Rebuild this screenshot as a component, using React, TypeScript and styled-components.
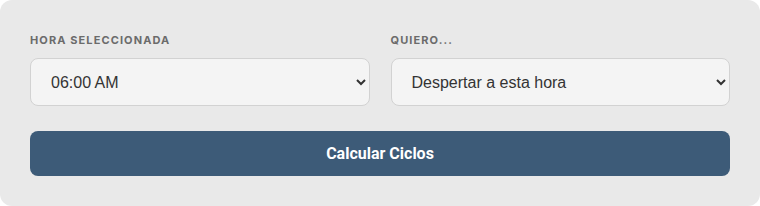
import React, { useState } from 'react';
import styled, { createGlobalStyle } from 'styled-components';

//全体のスタイル
const GlobalStyle = createGlobalStyle`
  html, body {
    margin: 0;
    padding: 0;
    background: #ffffff;
  }
`;

//カード
const Card = styled.div`
  box-sizing: border-box;
  width: 760px;
  height: 206px;
  background: #e9e9e9;
  border-radius: 12px;
  padding: 32px 30px 30px;
  font-family: "Liberation Sans", Arial, sans-serif;
`;

const Row = styled.div`
  display: grid;
  grid-template-columns: 1fr 1fr;
  column-gap: 21px;
`;

const Field = styled.div`
  display: flex;
  flex-direction: column;
`;

const Label = styled.label`
  font-family: Inter, "Liberation Sans", sans-serif;
  font-size: 11px;
  font-weight: 700;
  letter-spacing: 1.1px;
  text-transform: uppercase;
  color: #6b6b6b;
  line-height: 16px;
  margin-bottom: 10px;
`;

const Select = styled.select`
  box-sizing: border-box;
  height: 48px;
  width: 100%;
  padding: 0 14px 0 16px;
  border: 1px solid #d2d2d2;
  border-radius: 8px;
  background: #f4f4f4;
  color: #333333;
  font-family: "Liberation Sans", Arial, sans-serif;
  font-size: 16px;
`;

const Button = styled.button`
  box-sizing: border-box;
  display: block;
  width: 100%;
  height: 45px;
  margin-top: 25px;
  border: none;
  border-radius: 8px;
  background: #3d5b78;
  color: #ffffff;
  font-family: Roboto, "Liberation Sans", sans-serif;
  font-size: 16px;
  font-weight: 700;
  cursor: pointer;
`;

function App() {
  const [hora, setHora] = useState('06:00');
  const [modo, setModo] = useState('despertar');

  return (
    <>
      <GlobalStyle />
      <Card>
        <Row>
          <Field>
            <Label>Hora seleccionada</Label>
            <Select value={hora} onChange={(e) => setHora(e.target.value)}>
              <option value="06:00">06:00 AM</option>
              <option value="06:30">06:30 AM</option>
              <option value="07:00">07:00 AM</option>
            </Select>
          </Field>
          <Field>
            <Label>Quiero...</Label>
            <Select value={modo} onChange={(e) => setModo(e.target.value)}>
              <option value="despertar">Despertar a esta hora</option>
              <option value="dormir">Dormir a esta hora</option>
            </Select>
          </Field>
        </Row>
        <Button>Calcular Ciclos</Button>
      </Card>
    </>
  );
}

export default App;
